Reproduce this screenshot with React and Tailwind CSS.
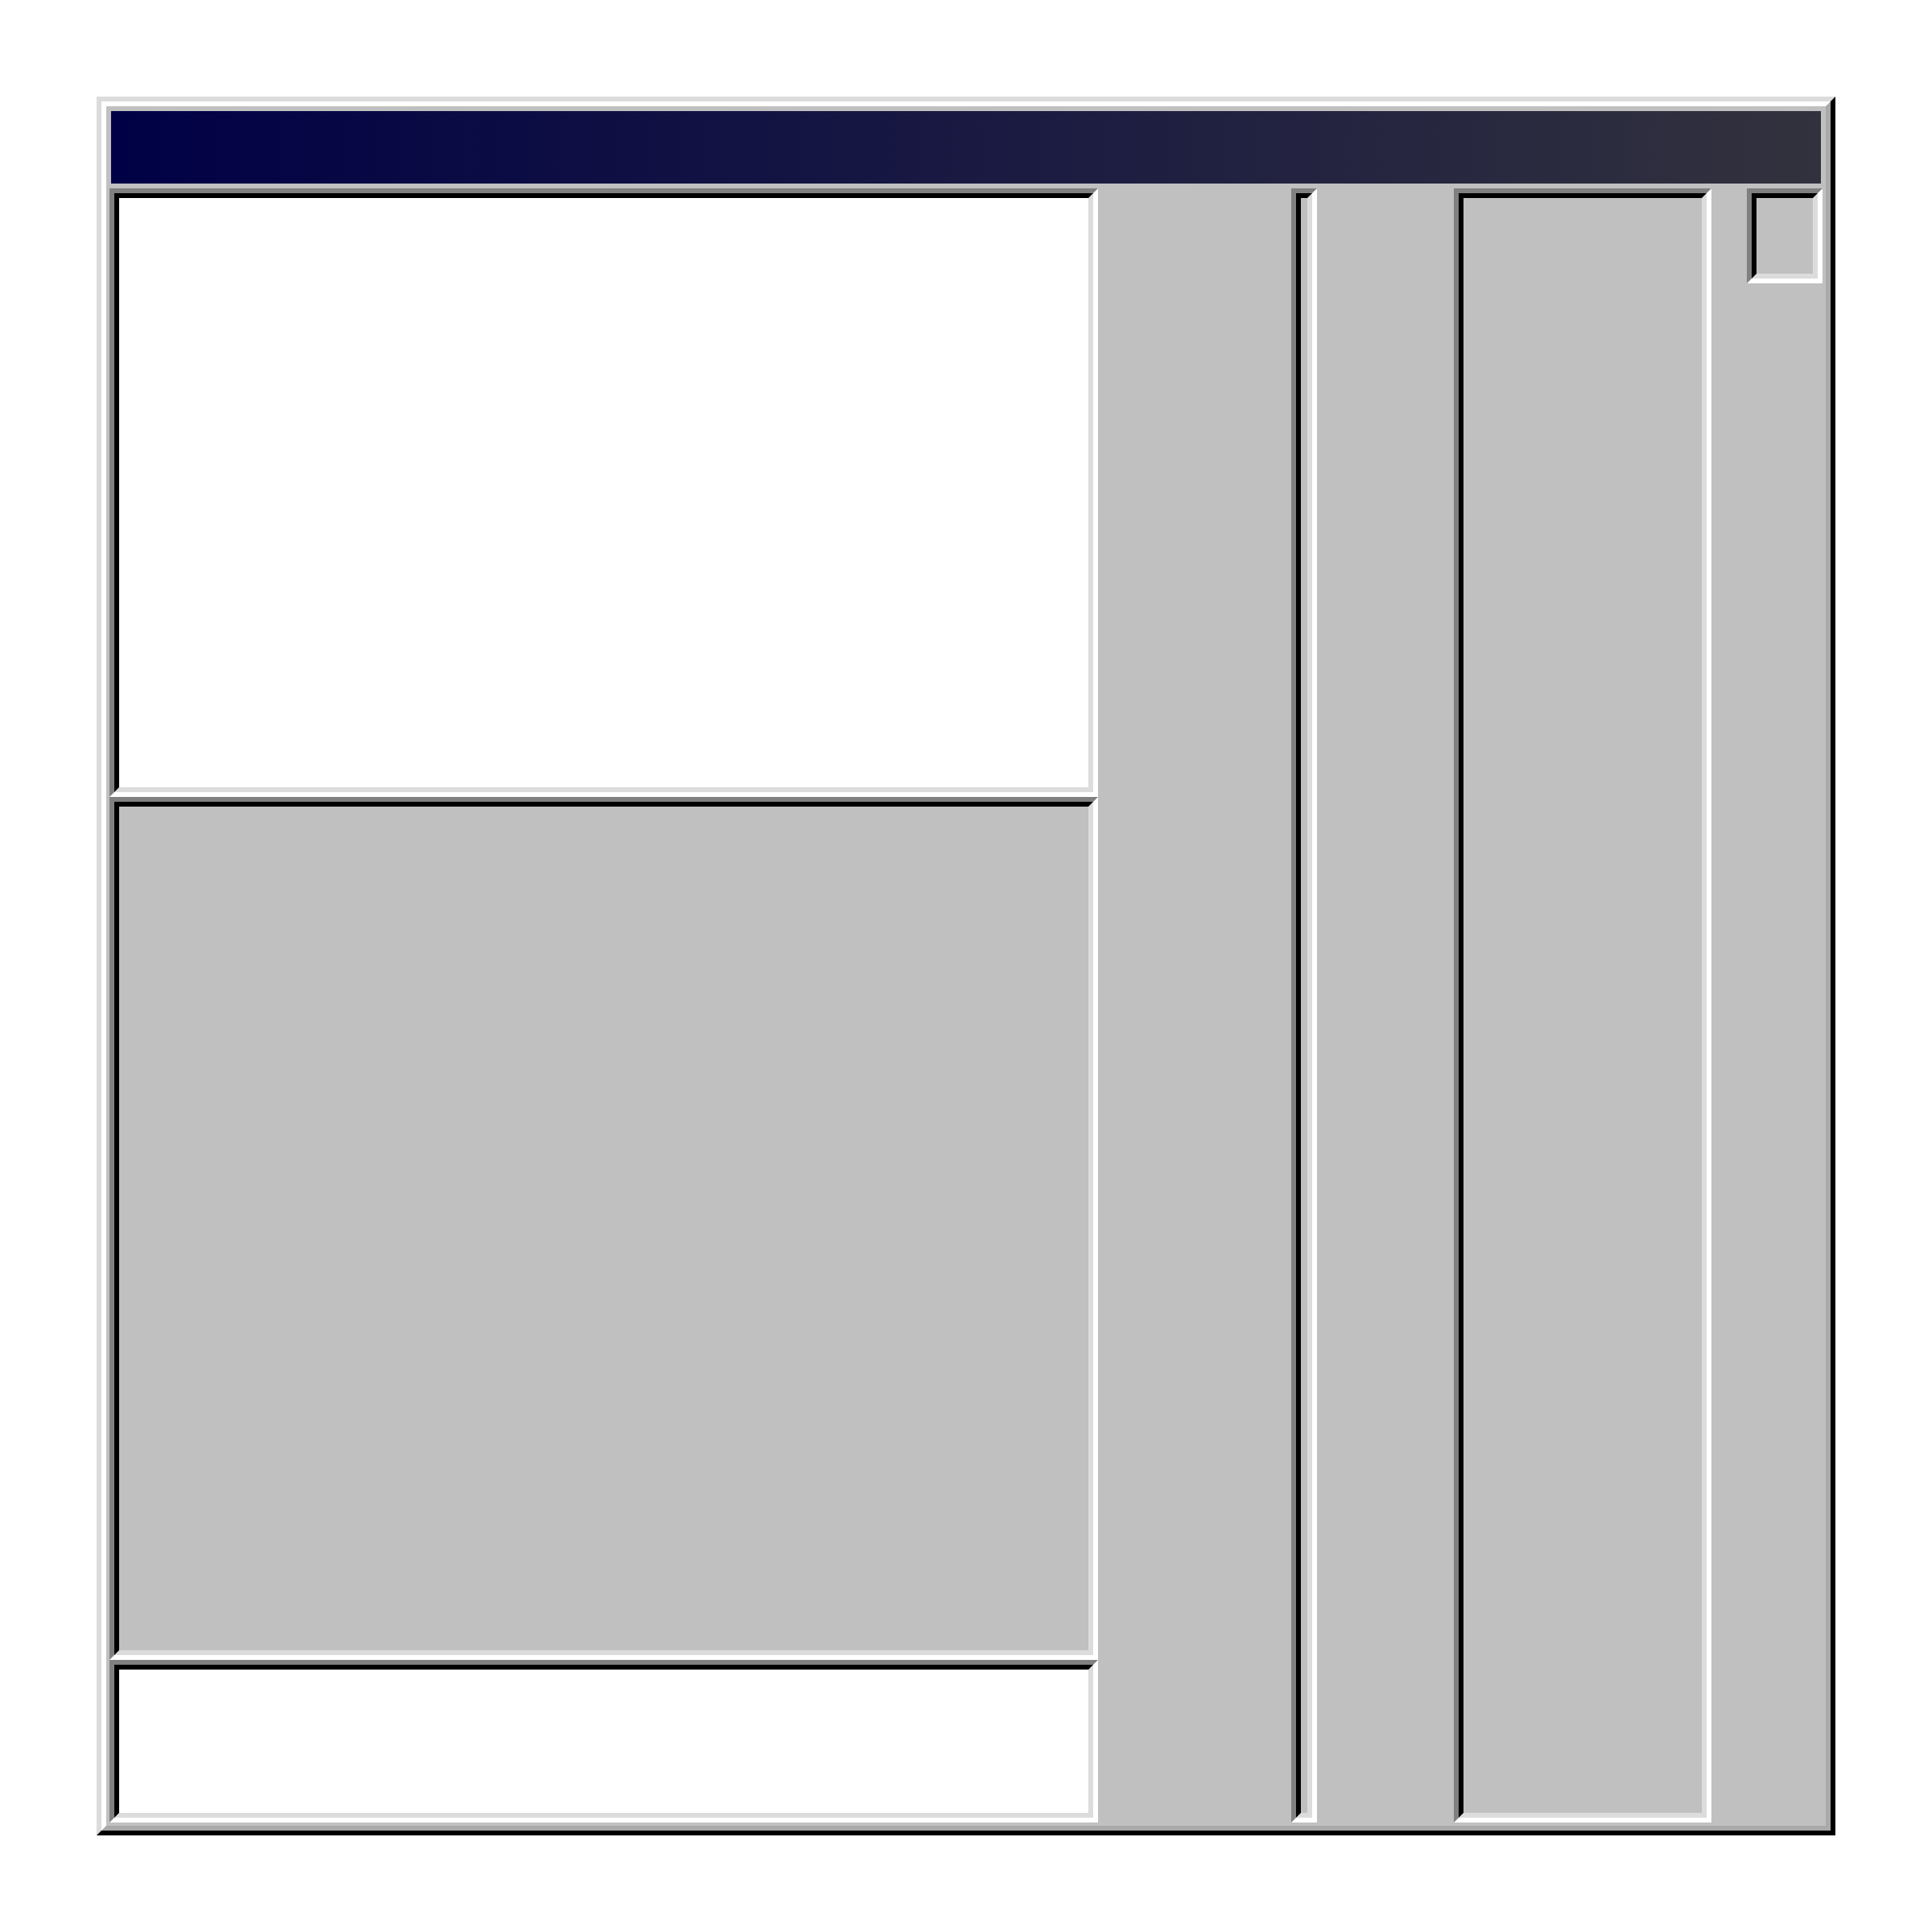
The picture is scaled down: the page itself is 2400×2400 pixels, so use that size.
import React from "react";

// Win9x-style sunken frame: two 6px bevels
function Sunken({ className = "", fill = "bg-[#c0c0c0]" }) {
  return (
    <div
      className={`border-[6px] border-t-[#808080] border-l-[#808080] border-r-white border-b-white ${className}`}
    >
      <div
        className={`h-full border-[6px] border-t-black border-l-black border-r-[#dcdcdc] border-b-[#dcdcdc] ${fill}`}
      />
    </div>
  );
}

export default function App() {
  return (
    <div className="w-[2400px] h-[2400px] bg-white p-[120px]">
      {/* window frame */}
      <div className="w-[2160px] h-[2160px] border-[6px] border-t-[#dcdcdc] border-l-[#dcdcdc] border-r-black border-b-black">
        <div className="h-full flex flex-col p-[4px] bg-[#c0c0c0] border-[6px] border-t-white border-l-white border-r-[#a9a9a9] border-b-[#a9a9a9]">
          {/* title bar */}
          <div className="mx-[2px] mt-[2px] h-[90px] shrink-0 bg-linear-to-r/srgb from-[#000046] to-[#32323e]" />

          <div className="mt-[6px] flex flex-1 items-start">
            <div className="w-[1228px] h-full flex flex-col shrink-0">
              <Sunken className="h-[756px]" fill="bg-white" />
              <Sunken className="h-[1072px]" />
              <Sunken className="h-[202px]" fill="bg-white" />
            </div>

            <Sunken className="w-[32px] h-full ml-[240px] shrink-0" />
            <Sunken className="w-[320px] h-full ml-[170px] shrink-0" />
            <Sunken className="w-[94px] h-[118px] ml-[44px] shrink-0" />
          </div>
        </div>
      </div>
    </div>
  );
}
